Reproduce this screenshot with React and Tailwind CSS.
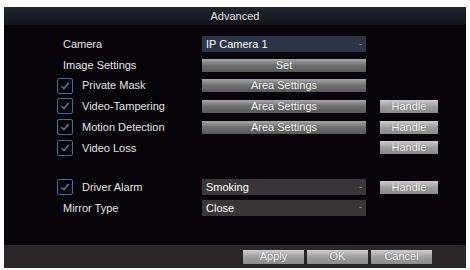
import React from "react";

const btn =
  "flex items-center justify-center h-[13px] text-[11px] leading-none text-white bg-gradient-to-b from-[#a8a8a8] via-[#6e6e6e] to-[#595959] [text-shadow:0_0_1px_#333]";
const handleBtn =
  "flex items-center justify-center h-[13px] w-[58px] text-[11px] leading-none text-white bg-gradient-to-b from-[#cfcfcf] via-[#9c9c9c] to-[#8a8a8a] [text-shadow:0_0_1px_#444]";

function Check() {
  return (
    <span className="w-[16px] h-[16px] border border-[#3f6f9e] rounded-[2px] flex items-center justify-center mr-[9px] -ml-[6px]">
      <svg width="10" height="10" viewBox="0 0 10 10">
        <path d="M1.5 5.2 L4 7.6 L8.6 2" stroke="#5f8dba" strokeWidth="1.3" fill="none" />
      </svg>
    </span>
  );
}

function Select({ value, blue }) {
  return (
    <div
      className={`flex items-center justify-between h-[16px] w-[164px] px-[4px] text-[11px] text-white ${
        blue ? "bg-[#2d3447]" : "bg-[#3a3638]"
      }`}
    >
      <span>{value}</span>
      <span className="text-[#aaa] text-[9px]">-</span>
    </div>
  );
}

function Row({ check, label, control, handle }) {
  return (
    <div className="flex items-center h-[20.7px]">
      <div className="flex items-center w-[146px] pl-[7px]">
        {check && <Check />}
        <span className="text-[11px] text-[#e6e6e6]">{label}</span>
      </div>
      <div className="w-[164px]">{control}</div>
      <div className="ml-[14px]">{handle && <div className={handleBtn}>Handle</div>}</div>
    </div>
  );
}

export default function App() {
  return (
    <div
      className="w-[470px] h-[270px] bg-white pt-[7px] pl-[4px] pr-[4px] pb-[2px]"
      style={{ fontFamily: '"Liberation Sans", Arial, sans-serif' }}
    >
      <div className="h-full flex flex-col bg-[#060408]">
        <div className="h-[18px] flex items-center justify-center text-[11px] text-[#e0e0e0] bg-gradient-to-b from-[#22242e] to-[#14151b]">
          Advanced
        </div>
        <div className="flex-1 pl-[52px] pt-[9px]">
          <Row label="Camera" control={<Select value="IP Camera 1" blue />} />
          <Row label="Image Settings" control={<div className={btn}>Set</div>} />
          <Row check label="Private Mask" control={<div className={btn}>Area Settings</div>} />
          <Row check label="Video-Tampering" control={<div className={btn}>Area Settings</div>} handle />
          <Row check label="Motion Detection" control={<div className={btn}>Area Settings</div>} handle />
          <Row check label="Video Loss" handle />
          <div className="h-[18.8px]" />
          <Row check label="Driver Alarm" control={<Select value="Smoking" />} handle />
          <Row label="Mirror Type" control={<Select value="Close" />} />
        </div>
        <div className="h-[23px] bg-[#2b2729] flex items-center justify-end gap-[3px] pr-[34px]">
          {["Apply", "OK", "Cancel"].map((t) => (
            <div
              key={t}
              className="w-[61px] h-[14px] flex items-center justify-center text-[11px] text-white bg-gradient-to-b from-[#d0d0d0] via-[#a0a0a0] to-[#8c8c8c] [text-shadow:0_0_1px_#444]"
            >
              {t}
            </div>
          ))}
        </div>
      </div>
    </div>
  );
}
